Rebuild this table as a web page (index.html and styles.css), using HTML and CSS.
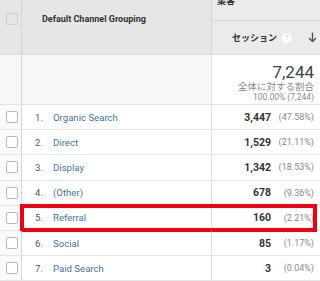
FILE: index.html
```html
<!DOCTYPE html>
<html>
<head>
<meta charset="utf-8">
<link rel="stylesheet" href="styles.css">
</head>
<body>
<div class="table">
  <div class="head">
    <div class="hcheck"><span class="cb"></span></div>
    <div class="hdim">Default Channel Grouping</div>
    <div class="hmetric">
      <div class="group">集客</div>
      <div class="mname"><span>セッション</span><span class="help">?</span><span class="arrow">
        <svg width="9" height="11" viewBox="0 0 9 11"><path d="M4.5 0.5 V9.5 M1 6 L4.5 9.5 L8 6" stroke="#555" stroke-width="1.4" fill="none"/></svg>
      </span></div>
    </div>
  </div>
  <div class="summary">
    <div class="scheck"></div>
    <div class="sdim"></div>
    <div class="smetric">
      <div class="total">7,244</div>
      <div class="pct-label">全体に対する割合</div>
      <div class="pct-val">100.00% (7,244)</div>
    </div>
  </div>
  <div class="row"><div class="ccheck"><span class="cb"></span></div><div class="cdim"><span class="idx">1.</span><a>Organic Search</a></div><div class="cval"><b>3,447</b><span class="p">(47.58%)</span></div></div>
  <div class="row"><div class="ccheck"><span class="cb"></span></div><div class="cdim"><span class="idx">2.</span><a>Direct</a></div><div class="cval"><b>1,529</b><span class="p">(21.11%)</span></div></div>
  <div class="row"><div class="ccheck"><span class="cb"></span></div><div class="cdim"><span class="idx">3.</span><a>Display</a></div><div class="cval"><b>1,342</b><span class="p">(18.53%)</span></div></div>
  <div class="row"><div class="ccheck"><span class="cb"></span></div><div class="cdim"><span class="idx">4.</span><a>(Other)</a></div><div class="cval"><b>678</b><span class="p">(9.36%)</span></div></div>
  <div class="row hl"><div class="ccheck"><span class="cb"></span></div><div class="cdim"><span class="idx">5.</span><a>Referral</a></div><div class="cval"><b>160</b><span class="p">(2.21%)</span></div><div class="redbox"></div></div>
  <div class="row"><div class="ccheck"><span class="cb"></span></div><div class="cdim"><span class="idx">6.</span><a>Social</a></div><div class="cval"><b>85</b><span class="p">(1.17%)</span></div></div>
  <div class="row"><div class="ccheck"><span class="cb"></span></div><div class="cdim"><span class="idx">7.</span><a>Paid Search</a></div><div class="cval"><b>3</b><span class="p">(0.04%)</span></div></div>
</div>
</body>
</html>
```
FILE: styles.css
```css
* { box-sizing: border-box; }
html, body { margin: 0; padding: 0; background: #fff; }
body { font-family: Roboto, "Noto Sans CJK JP", sans-serif; color: #222; width: 320px; height: 281px; overflow: hidden; }
.table { width: 320px; }
.head, .summary, .row { display: grid; grid-template-columns: 22px 190px 108px; }
.head { height: 55px; background: #e6e6e6; border-bottom: 1px solid #dcdcdc; }
.hcheck { border-right: 1px solid #d6d6d6; padding: 13px 0 0 6px; }
.hdim { font-size: 9px; font-weight: 700; color: #333; padding: 14px 0 0 20px; border-right: 1px solid #d6d6d6; }
.hmetric { display: flex; flex-direction: column; background: #ebebeb; }
.group { font-size: 9px; font-weight: 700; padding: 0 0 0 5px; line-height: 9px; margin-top: -3px; border-bottom: 1px solid #d6d6d6; height: 24px; color: #333; }
.mname { display: flex; align-items: center; font-size: 9px; font-weight: 700; color: #333; padding: 0 3px 0 20px; flex: 1; }
.help { width: 10px; height: 10px; border-radius: 50%; background: #fff; color: #ccc; font-size: 7px; line-height: 10px; text-align: center; margin-left: 5px; font-weight: 400; }
.arrow { margin-left: auto; display: flex; }
.cb { display: block; width: 12px; height: 12px; border: 1px solid #b9b9b9; border-radius: 2px; background: #fff; }
.hcheck .cb { background: #e6e6e6; border-color: #cfcfcf; }
.summary { height: 50px; border-bottom: 1px solid #e3e3e3; }
.scheck { background: #f7f7f7; border-right: 1px solid #d6d6d6; }
.sdim { background: #f7f7f7; border-right: 1px solid #e0e0e0; }
.smetric { text-align: right; padding: 7px 6px 0 0; color: #777; }
.total { font-size: 17px; line-height: 20px; color: #444; }
.pct-label { font-size: 9.5px; line-height: 10px; color: #888; }
.pct-val { font-size: 8.5px; line-height: 10px; color: #888; }
.row { height: 25.2px; border-bottom: 1px solid #e6e6e6; position: relative; align-items: stretch; }
.ccheck { background: #fafafa; border-right: 1px solid #d6d6d6; display: flex; align-items: center; padding-left: 6px; }
.cdim { display: flex; align-items: center; font-size: 9.6px; border-right: 1px solid #e0e0e0; }
.idx { width: 18px; margin-left: 13px; color: #555; }
.cdim a { color: #44739e; }
.cval { display: flex; align-items: center; justify-content: flex-end; font-size: 10.5px; padding-right: 6px; }
.cval b { font-weight: 700; color: #333; }
.cval .p { font-size: 9px; color: #888; margin-left: 5px; width: 38px; text-align: right; }
.redbox { position: absolute; left: 20px; top: -2px; width: 297px; height: 28px; border: 4px solid #f00012; pointer-events: none; }
```
